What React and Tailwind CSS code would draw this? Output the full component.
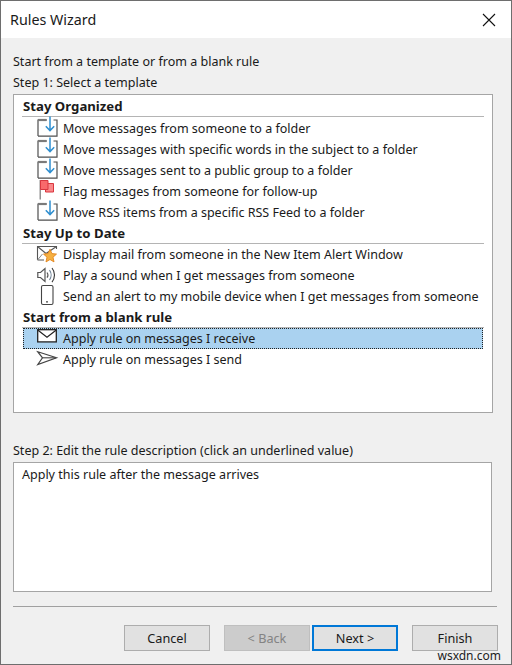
const Svg = ({ children }) => (
  <svg width="24" height="21" viewBox="0 0 24 21" className="shrink-0 overflow-visible" fill="none">
    {children}
  </svg>
);
const F = () => (
  <Svg>
    <path d="M1 18V2H10M1 18.2H20V2H16.5" stroke="#4f4f4f" strokeWidth="1.2" />
    <path d="M1 2H9.5" stroke="#7a7a7a" strokeWidth="2.2" />
    <path d="M13 -1.5V12.5M8.8 8.3L13 12.6L17.2 8.3" stroke="#2f8fd0" strokeWidth="1.5" />
  </Svg>
);
const Flag = () => (
  <Svg>
    <path d="M3.2 -1V18.5" stroke="#777" strokeWidth="1.2" />
    <path d="M8.5 2.5H16.5V11H8.5Z" fill="#f9888a" stroke="#d9363e" strokeWidth="1" />
    <path d="M3.5 -0.5H11V8.5H3.5Z" fill="#f8696b" stroke="#d9363e" strokeWidth="1" />
  </Svg>
);
const MailStar = () => (
  <Svg>
    <path d="M0.5 16V2.5H19.5V5M0.5 16H7" stroke="#555" strokeWidth="1.1" />
    <path d="M0.5 2.5L9 9.5L19.5 2.5" stroke="#555" strokeWidth="1.1" />
    <path d="M0.5 16L5.5 10" stroke="#888" strokeWidth="1" />
    <path d="M13 5.2L14.9 9.6L19.5 10.1L16 13.2L17 17.9L13 15.5L9 17.9L10 13.2L6.5 10.1L11.1 9.6Z" fill="#f5b041" stroke="#e2841e" strokeWidth="0.9" />
  </Svg>
);
const Sound = () => (
  <Svg>
    <path d="M0.8 7.5V12.5H3.5L8 16.5V3.5L3.5 7.5Z" fill="#fff" stroke="#555" strokeWidth="1.2" />
    <path d="M10 7.5C11.3 9.2 11.3 11 10 12.7" stroke="#555" strokeWidth="1.1" />
    <path d="M12.5 5.2C14.6 8 14.6 12.2 12.5 15" stroke="#6a7f94" strokeWidth="1.1" />
    <path d="M15 3C18.3 7 18.3 13.2 15 17.2" stroke="#333" strokeWidth="1.1" />
  </Svg>
);
const Phone = () => (
  <Svg>
    <rect x="4.5" y="-0.5" width="11.5" height="19" rx="1.5" fill="#fff" stroke="#444" strokeWidth="1.1" />
    <path d="M9 15.8H11" stroke="#444" strokeWidth="1.2" />
  </Svg>
);
const Mail = () => (
  <Svg>
    <rect x="0.7" y="1.7" width="18.6" height="12.2" fill="#fff" stroke="#222" strokeWidth="1.3" />
    <path d="M0.7 2L10 9.2L19.3 2" stroke="#222" strokeWidth="1.2" />
  </Svg>
);
const Send = () => (
  <Svg>
    <path d="M0.8 2.8L19.5 8.8L0.8 15.5L5.5 8.8Z" fill="#fff" stroke="#444" strokeWidth="1.2" />
    <path d="M5.5 8.8H19" stroke="#444" strokeWidth="1.1" />
  </Svg>
);

const Header = ({ children }) => (
  <div className="h-[21px] border-b border-[#b4b4b4] ml-[8px] mr-[8px] pl-px font-bold flex items-center text-[13.2px]">
    {children}
  </div>
);
const Row = ({ icon, children, selected }) => (
  <div
    className={`h-[21px] flex items-center ml-[9px] mr-[9px] ${
      selected ? "pl-[13px] bg-[#aad2f0] border border-dotted border-[#222]" : "pl-[14px]"
    }`}
  >
    <span className="w-[26px] shrink-0 flex">{icon}</span>
    <span className="whitespace-nowrap">{children}</span>
  </div>
);
const Btn = ({ children, className = "" }) => (
  <button className={`w-[86px] h-[26px] flex items-center justify-center border text-[12.7px] ${className}`}>
    {children}
  </button>
);

export default function App() {
  return (
    <div
      className="relative w-[512px] h-[665px] bg-[#f0f0f0] border border-[#6e6e6e] overflow-hidden text-[#1a1a1a] text-[12.53px] leading-[21px] flex flex-col"
      style={{ fontFamily: '"Noto Sans", sans-serif' }}
    >
      <div className="h-[37px] shrink-0 bg-white flex items-center justify-between pl-[9px] pr-[15px] text-[14.3px]">
        <span>Rules Wizard</span>
        <svg width="14" height="14" viewBox="0 0 14 14" fill="none">
          <path d="M1 1L13 13M13 1L1 13" stroke="#111" strokeWidth="1.1" />
        </svg>
      </div>

      <div className="flex flex-col flex-1 pl-[12px] pr-[12px]">
        <div className="mt-[13px] h-[21px]">Start from a template or from a blank rule</div>
        <div className="h-[21px]">Step 1: Select a template</div>
        <div className="mt-[1px] w-[480px] h-[319px] bg-white border border-[#a5a5a5] pt-[1px]">
          <Header>Stay Organized</Header>
          <div className="mt-[1px]">
            <Row icon={<F />}>Move messages from someone to a folder</Row>
            <Row icon={<F />}>Move messages with specific words in the subject to a folder</Row>
            <Row icon={<F />}>Move messages sent to a public group to a folder</Row>
            <Row icon={<Flag />}>Flag messages from someone for follow-up</Row>
            <Row icon={<F />}>Move RSS items from a specific RSS Feed to a folder</Row>
          </div>
          <Header>Stay Up to Date</Header>
          <Row icon={<MailStar />}>Display mail from someone in the New Item Alert Window</Row>
          <Row icon={<Sound />}>Play a sound when I get messages from someone</Row>
          <Row icon={<Phone />}>Send an alert to my mobile device when I get messages from someone</Row>
          <Header>Start from a blank rule</Header>
          <Row selected icon={<Mail />}>Apply rule on messages I receive</Row>
          <Row icon={<Send />}>Apply rule on messages I send</Row>
        </div>

        <div className="mt-[27px] h-[21px]">Step 2: Edit the rule description (click an underlined value)</div>
        <div className="mt-[1px] w-[479px] h-[130px] bg-white border border-[#a5a5a5] pl-[8px] pt-[1px]">
          Apply this rule after the message arrives
        </div>

        <div className="mt-[14px] h-px w-[484px] bg-[#a0a0a0]" />

        <div className="mt-[18px] flex justify-end pr-[1px]">
          <Btn className="bg-[#e1e1e1] border-[#adadad]">Cancel</Btn>
          <Btn className="ml-[14px] bg-[#cccccc] border-[#bfbfbf] text-[#838383]">&lt; Back</Btn>
          <Btn className="ml-[2px] bg-[#e1e1e1] border-2 border-[#0078d7]">Next &gt;</Btn>
          <Btn className="ml-[14px] bg-[#e1e1e1] border-[#adadad]">Finish</Btn>
        </div>
      </div>

      <div className="absolute right-[10px] bottom-[0px] text-[12px] leading-[17px] text-[#222]">wsxdn.com</div>
    </div>
  );
}
